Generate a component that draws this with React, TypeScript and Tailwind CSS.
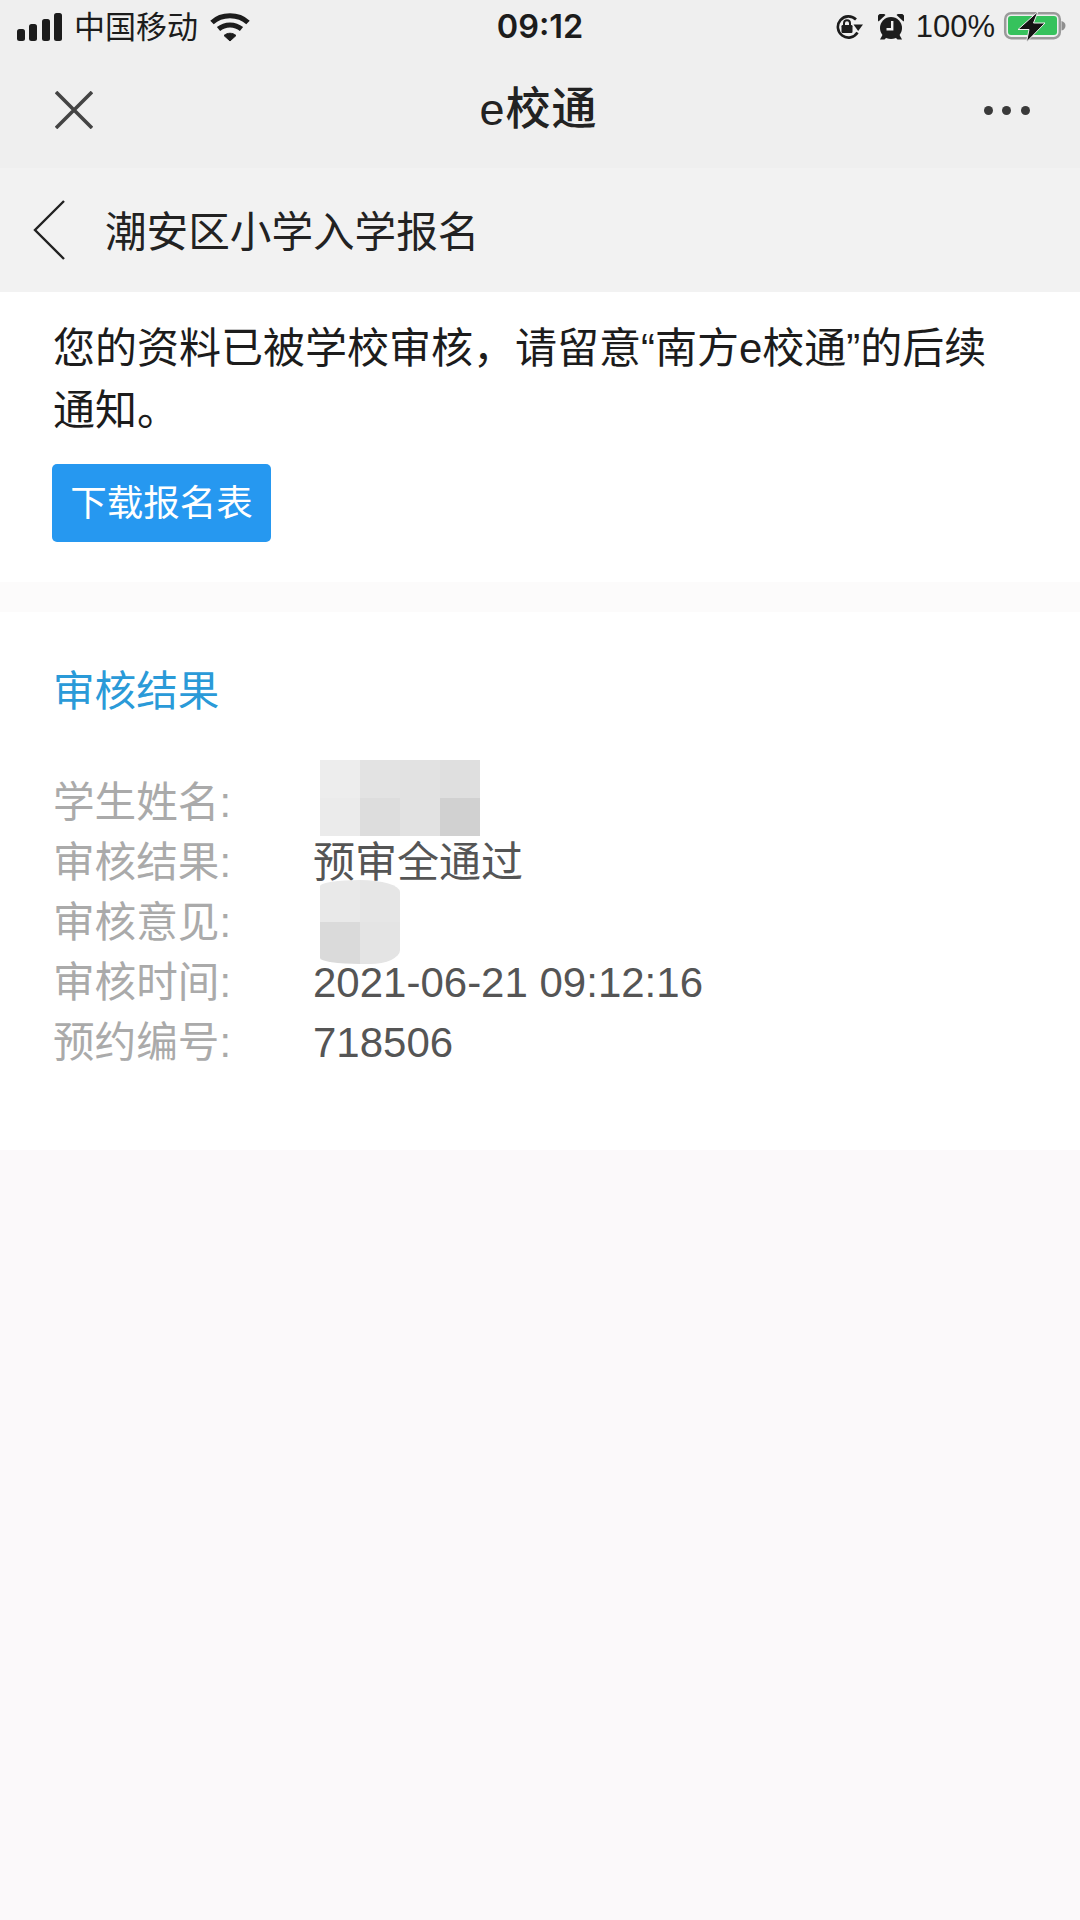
const rows = [
  { label: "学生姓名:", value: "", mosaic: "name" },
  { label: "审核结果:", value: "预审全通过" },
  { label: "审核意见:", value: "", mosaic: "note" },
  { label: "审核时间:", value: "2021-06-21 09:12:16" },
  { label: "预约编号:", value: "718506" },
];

function SignalIcon() {
  return (
    <svg width="46" height="28" viewBox="0 0 46 28" fill="#1c1c1c">
      <rect x="0" y="16" width="8" height="12" rx="2.5" />
      <rect x="12" y="11" width="8" height="17" rx="2.5" />
      <rect x="25" y="6" width="8" height="22" rx="2.5" />
      <rect x="37" y="0" width="8" height="28" rx="2.5" />
    </svg>
  );
}

function WifiIcon() {
  return (
    <svg width="40" height="30" viewBox="0 0 40 30" fill="none" stroke="#1c1c1c" strokeWidth="5">
      <path d="M2 10.5C11.5 1.5 28.5 1.5 38 10.5" />
      <path d="M8.5 17C15 11.5 25 11.5 31.5 17" />
      <path d="M14 23.5L20 29L26 23.5C22.5 20.5 17.5 20.5 14 23.5Z" fill="#1c1c1c" strokeWidth="1" />
    </svg>
  );
}

function RotationLockIcon() {
  return (
    <svg width="28" height="24" viewBox="0 0 28 24" fill="none">
      <path d="M22.5 17.5A10.6 10.6 0 1 1 21 4.5" stroke="#1c1c1c" strokeWidth="2.6" />
      <path d="M28 9.5L18.5 9.5L23.2 16Z" fill="#1c1c1c" />
      <rect x="6.5" y="10" width="11" height="8" rx="1.2" fill="#1c1c1c" />
      <path d="M9 10.5V8.2A3 3 0 0 1 15 8.2V10.5" stroke="#1c1c1c" strokeWidth="2" />
    </svg>
  );
}

function AlarmIcon() {
  return (
    <svg width="26" height="26" viewBox="0 0 26 26" fill="#1c1c1c">
      <path d="M0.5 7.5A4.6 4.6 0 0 1 7.5 1Z" />
      <path d="M25.5 7.5A4.6 4.6 0 0 0 18.5 1Z" />
      <circle cx="13" cy="14" r="11" />
      <path d="M5 20L2 25.5H6.5L9 23Z" />
      <path d="M21 20L24 25.5H19.5L17 23Z" />
      <path d="M14.2 7V15.2H8.5" fill="none" stroke="#f0f0f0" strokeWidth="2.4" />
    </svg>
  );
}

function BatteryIcon() {
  return (
    <svg width="64" height="32" viewBox="0 0 64 32" fill="none">
      <rect x="3.2" y="2.2" width="54.6" height="25" rx="6" stroke="#9a9a9a" strokeWidth="2.5" />
      <rect x="6" y="5" width="49" height="19" rx="3" fill="#36c25c" />
      <path d="M59.5 10C62 10.5 63.5 12.5 63.5 14.7S62 19 59.5 19.5Z" fill="#8f8f8f" />
      <path d="M36 0.5L16 18.5H27L24.5 31L43 12H31.5Z" fill="#141414" stroke="#f0f0f0" strokeWidth="1" />
    </svg>
  );
}

function CloseIcon() {
  return (
    <svg width="38" height="38" viewBox="0 0 38 38" stroke="#444444" strokeWidth="3.6" fill="none">
      <path d="M1 1L37 37M37 1L1 37" />
    </svg>
  );
}

function BackIcon() {
  return (
    <svg width="32" height="60" viewBox="0 0 32 60" stroke="#222222" strokeWidth="2.4" fill="none">
      <path d="M31 1L2 30L31 59" />
    </svg>
  );
}

function NameMosaic() {
  return (
    <div className="absolute left-[7px] top-[-42px] grid h-[76px] w-[160px] grid-cols-4 grid-rows-2">
      <div className="bg-[#ededed]" />
      <div className="bg-[#e3e3e3]" />
      <div className="bg-[#e2e2e2]" />
      <div className="bg-[#dfdfdf]" />
      <div className="bg-[#ebebeb]" />
      <div className="bg-[#dddddd]" />
      <div className="bg-[#e2e2e2]" />
      <div className="bg-[#d1d1d1]" />
    </div>
  );
}

function NoteMosaic() {
  return (
    <div className="absolute left-[7px] top-[-42px] grid h-[84px] w-[80px] grid-cols-2 grid-rows-2 overflow-hidden rounded-tl-[40px_6px] rounded-tr-[40px_12px] rounded-br-[30px_14px] rounded-bl-[40px_6px]">
      <div className="bg-[#e9e9e9]" />
      <div className="bg-[#e6e6e6]" />
      <div className="bg-[#dadada]" />
      <div className="bg-[#e4e4e4]" />
    </div>
  );
}

export default function App() {
  return (
    <div className="flex h-[1920px] w-[1080px] flex-col overflow-hidden bg-[#fbf9fa] font-['Liberation_Sans','Noto_Sans_CJK_SC',sans-serif] text-[42px] text-[#1f1f1f]">
      {/* Status bar + webview title */}
      <div className="h-[168px] bg-[#efefef]">
        <div className="grid h-[54px] grid-cols-[1fr_auto_1fr] items-center px-[14px] text-[#1c1c1c]">
          <div className="flex items-center pl-[3px]">
            <SignalIcon />
            <span className="ml-[11px] pt-[2px] text-[31px]">中国移动</span>
            <div className="ml-[12px]">
              <WifiIcon />
            </div>
          </div>
          <span className="pt-[1px] font-['Inter',sans-serif] text-[32.5px] font-semibold">09:12</span>
          <div className="flex items-center justify-end">
            <RotationLockIcon />
            <div className="ml-[15px]">
              <AlarmIcon />
            </div>
            <span className="ml-[12px] pt-[1px] text-[31px]">100%</span>
            <div className="ml-[7px]">
              <BatteryIcon />
            </div>
          </div>
        </div>
        <div className="flex h-[114px] items-center justify-between pb-[2px] pl-[55px] pr-[50px]">
          <CloseIcon />
          <span className="text-[45px] font-medium tracking-[1px] text-[#222222]">e校通</span>
          <div className="flex gap-[9.6px]">
            <div className="h-[9px] w-[9px] rounded-full bg-[#3a3a3a]" />
            <div className="h-[9px] w-[9px] rounded-full bg-[#3a3a3a]" />
            <div className="h-[9px] w-[9px] rounded-full bg-[#3a3a3a]" />
          </div>
        </div>
      </div>

      {/* Page title */}
      <div className="flex h-[124px] items-center bg-[#f2f2f2] pl-[33px]">
        <BackIcon />
        <span className="ml-[40px] pt-[5px] text-[41.6px] leading-[62px] text-[#222222]">潮安区小学入学报名</span>
      </div>

      {/* Notice */}
      <div className="bg-white pb-[40px] pl-[53px] pr-[54px] pt-[26px]">
        <p className="leading-[62px] text-[#1c1c1c]">您的资料已被学校审核，请留意“南方e校通”的后续通知。</p>
        <button className="-ml-px mt-[22px] flex h-[78px] w-[219px] items-center justify-center rounded-[5px] bg-[#2698f0] pt-[3px] text-[36.5px] text-white">
          下载报名表
        </button>
      </div>

      <div className="h-[30px] bg-[#fcfbfb]" />

      {/* Review result */}
      <div className="bg-white pb-[78px] pl-[53px] pt-[49px]">
        <h2 className="text-[41.6px] leading-[62px] text-[#2a9ad8]">审核结果</h2>
        <div className="mt-[49px] flex flex-col text-[41.6px]">
          {rows.map((row) => (
            <div key={row.label} className="flex h-[60px] items-center">
              <span className="w-[260px] pt-[3px] text-[#aaaaaa]">{row.label}</span>
              <div className="relative text-[42px] text-[#555555]">
                {row.value}
                {row.mosaic === "name" && <NameMosaic />}
                {row.mosaic === "note" && <NoteMosaic />}
              </div>
            </div>
          ))}
        </div>
      </div>
    </div>
  );
}
